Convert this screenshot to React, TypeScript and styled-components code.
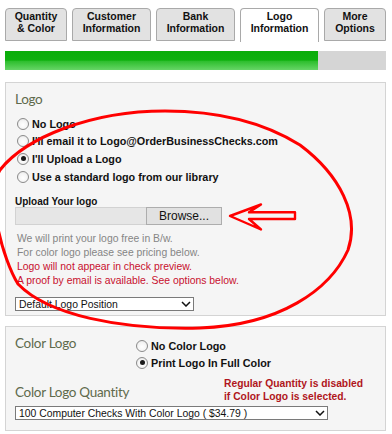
import React from "react";
import styled, { createGlobalStyle } from "styled-components";

const Global = createGlobalStyle`
  html, body { margin: 0; padding: 0; background: #ffffff; }
  body { font-family: "Liberation Sans", Arial, sans-serif; }
`;

const Page = styled.div`
  position: relative;
  width: 392px;
  height: 434px;
  box-sizing: border-box;
  padding: 8px 6px 0 5px;
  display: flex;
  flex-direction: column;
  overflow: hidden;
`;

const TabBar = styled.div`
  display: flex;
  gap: 5px;
  height: 34px;
  align-items: flex-start;
`;

const Tab = styled.div<{ $w: number; $active?: boolean }>`
  width: ${(p) => p.$w}px;
  height: ${(p) => (p.$active ? 34 : 33)}px;
  box-sizing: border-box;
  border: 1px solid #a9a9a9;
  border-bottom: ${(p) => (p.$active ? "none" : "1px solid #a9a9a9")};
  border-radius: 4px 4px 0 0;
  background: ${(p) => (p.$active ? "#ffffff" : "#e2e2e2")};
  padding-top: 2px;
  text-align: center;
  font-size: 10.5px;
  line-height: 11.6px;
  font-weight: bold;
  color: #111;
`;

const Progress = styled.div`
  margin-top: 9px;
  height: 19px;
  background: #d5d5d5;
  display: flex;
`;

const ProgressFill = styled.div`
  height: 100%;
  background: linear-gradient(
    to bottom,
    #0aad0a 0%,
    #0eb00e 48%,
    #2fbf2f 55%,
    #66d566 100%
  );
`;

const Panel = styled.div<{ $mt: number }>`
  margin-top: ${(p) => p.$mt}px;
  border: 1px solid #d4d4d4;
  background: #f5f5f5;
  box-sizing: border-box;
  padding: 8px 9px 4px 9px;
  display: flex;
  flex-direction: column;
`;

const Title = styled.div<{ $mt?: number; $w?: number }>`
  font-family: Lato, "Open Sans", sans-serif;
  font-size: 13.5px;
  letter-spacing: -0.3px;
  line-height: 17px;
  color: #5f6a4c;
  margin-top: ${(p) => p.$mt ?? 0}px;
  ${(p) => (p.$w ? `flex: 0 0 ${p.$w}px;` : "")}
`;

const RadioList = styled.div<{ $mt?: number }>`
  display: flex;
  flex-direction: column;
  margin-top: ${(p) => p.$mt ?? 0}px;
`;

const RadioRow = styled.label<{ $h: number }>`
  display: flex;
  align-items: center;
  height: ${(p) => p.$h}px;
  gap: 3px;
  font-size: 10.8px;
  font-weight: bold;
  color: #111;
  white-space: nowrap;
`;

const RadioDot = styled.span<{ $checked?: boolean; $ml?: number }>`
  width: 12px;
  height: 12px;
  margin-left: ${(p) => p.$ml ?? 0}px;
  box-sizing: border-box;
  border-radius: 50%;
  border: 1px solid #8a8a8a;
  background: radial-gradient(circle at 50% 60%, #ffffff 0%, #f4f4f4 55%, #dcdcdc 100%);
  display: flex;
  align-items: center;
  justify-content: center;
  flex: none;
  &::after {
    content: "";
    width: 5px;
    height: 5px;
    border-radius: 50%;
    background: #1a1a1a;
    display: ${(p) => (p.$checked ? "block" : "none")};
  }
`;

const UploadLabel = styled.div`
  margin-top: 11px;
  font-size: 10px;
  line-height: 11px;
  font-weight: bold;
  color: #111;
`;

const FileBox = styled.div`
  display: flex;
  height: 18px;
  width: 207px;
`;

const FileField = styled.div`
  flex: 1;
  box-sizing: border-box;
  background: #e6e6e6;
  border: 1px solid #d2d2d2;
  border-right: none;
`;

const BrowseButton = styled.div`
  width: 76px;
  box-sizing: border-box;
  background: #e1e1e1;
  border: 1px solid #adadad;
  font-size: 12px;
  line-height: 16px;
  text-align: center;
  color: #111;
`;

const Notes = styled.div`
  margin-top: 7px;
  padding-left: 2px;
  display: flex;
  flex-direction: column;
`;

const NoteLine = styled.div<{ $red?: boolean }>`
  font-size: 10.4px;
  line-height: 14px;
  color: ${(p) => (p.$red ? "#c8102e" : "#858585")};
`;

const SelectBox = styled.div<{ $w: number; $mt: number }>`
  margin-top: ${(p) => p.$mt}px;
  width: ${(p) => p.$w}px;
  height: 14px;
  box-sizing: border-box;
  border: 1px solid #7a7a7a;
  background: #ffffff;
  display: flex;
  align-items: center;
  justify-content: space-between;
  padding: 0 2px 0 3px;
  font-size: 10.4px;
  color: #111;
`;

const Row = styled.div<{ $mt?: number }>`
  display: flex;
  align-items: flex-start;
  margin-top: ${(p) => p.$mt ?? 0}px;
`;

const RedNote = styled.div`
  font-size: 10.3px;
  line-height: 13px;
  font-weight: bold;
  color: #b0161c;
`;

const Overlay = styled.svg`
  position: absolute;
  left: 0;
  top: 0;
  width: 392px;
  height: 434px;
  pointer-events: none;
`;

const Chevron = () => (
  <svg width="10" height="6" viewBox="0 0 10 6">
    <polyline points="1,1 5,5 9,1" fill="none" stroke="#111" strokeWidth="1.5" />
  </svg>
);

const tabs = [
  { w: 62, l1: "Quantity", l2: "& Color" },
  { w: 79, l1: "Customer", l2: "Information" },
  { w: 79, l1: "Bank", l2: "Information" },
  { w: 79, l1: "Logo", l2: "Information", active: true },
  { w: 62, l1: "More", l2: "Options" },
];

export default function App() {
  return (
    <>
      <Global />
      <Page>
        <TabBar>
          {tabs.map((t) => (
            <Tab key={t.l1} $w={t.w} $active={t.active}>
              {t.l1}
              <br />
              {t.l2}
            </Tab>
          ))}
        </TabBar>
        <Progress>
          <ProgressFill style={{ width: "313px" }} />
        </Progress>

        <Panel $mt={12}>
          <Title>Logo</Title>
          <RadioList $mt={7}>
            <RadioRow $h={17.6}>
              <RadioDot $ml={2} />
              No Logo
            </RadioRow>
            <RadioRow $h={17.6}>
              <RadioDot $ml={2} />
              I'll email it to Logo@OrderBusinessChecks.com
            </RadioRow>
            <RadioRow $h={17.6}>
              <RadioDot $ml={2} $checked />
              I'll Upload a Logo
            </RadioRow>
            <RadioRow $h={17.6}>
              <RadioDot $ml={2} />
              Use a standard logo from our library
            </RadioRow>
          </RadioList>
          <UploadLabel>Upload Your logo</UploadLabel>
          <FileBox>
            <FileField />
            <BrowseButton>Browse...</BrowseButton>
          </FileBox>
          <Notes>
            <NoteLine>We will print your logo free in B/w.</NoteLine>
            <NoteLine>For color logo please see pricing below.</NoteLine>
            <NoteLine $red>Logo will not appear in check preview.</NoteLine>
            <NoteLine $red>A proof by email is available. See options below.</NoteLine>
          </Notes>
          <SelectBox $w={179} $mt={9}>
            <span>Default Logo Position</span>
            <Chevron />
          </SelectBox>
        </Panel>

        <Panel $mt={10}>
          <Row>
            <Title $w={121}>Color Logo</Title>
            <RadioList $mt={2}>
              <RadioRow $h={17}>
                <RadioDot />
                No Color Logo
              </RadioRow>
              <RadioRow $h={17}>
                <RadioDot $checked />
                Print Logo In Full Color
              </RadioRow>
            </RadioList>
          </Row>
          <Row $mt={6}>
            <Title $w={209} $mt={7}>
              Color Logo Quantity
            </Title>
            <RedNote>
              Regular Quantity is disabled
              <br />
              if Color Logo is selected.
            </RedNote>
          </Row>
          <SelectBox $w={313} $mt={3}>
            <span>100 Computer Checks With Color Logo ( $34.79 )</span>
            <Chevron />
          </SelectBox>
          <div style={{ height: 6 }} />
        </Panel>

        <Overlay viewBox="0 0 392 434">
          <path
            d="M 165 111 C 90 111, 25 138, 0 170 C -15 195, 3 260, 18 284 C 48 315, 120 330, 200 328 C 280 325, 330 290, 348 250 C 360 215, 340 175, 300 145 C 260 120, 215 111, 165 111 Z"
            fill="none"
            stroke="#ff0000"
            strokeWidth="3"
          />
          <path
            d="M 230 216 L 261 204.5 L 249 212.3 L 295 212.3 L 295 219 L 249 219 L 261 229.5 Z"
            fill="none"
            stroke="#ff0000"
            strokeWidth="2.4"
            strokeLinejoin="round"
          />
        </Overlay>
      </Page>
    </>
  );
}
